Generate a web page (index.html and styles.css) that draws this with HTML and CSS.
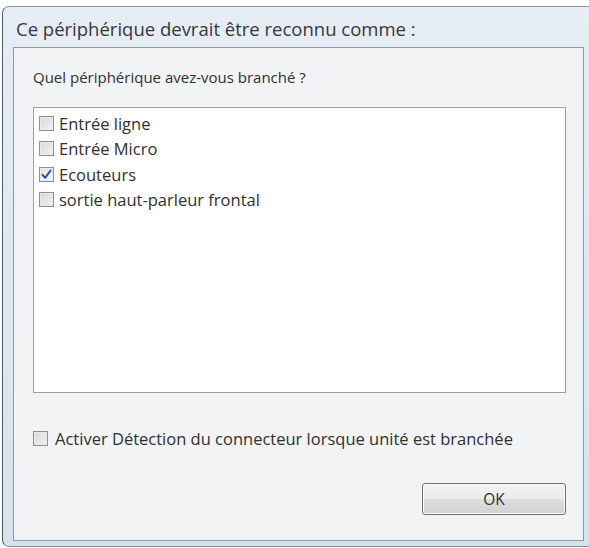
FILE: index.html
```html
<!DOCTYPE html>
<html lang="fr">
<head>
<meta charset="utf-8">
<title>Détection du connecteur</title>
<link rel="stylesheet" href="styles.css">
</head>
<body>
<div class="window">
  <div class="title">Ce périphérique devrait être reconnu comme :</div>
  <div class="panel">
    <div class="question">Quel périphérique avez-vous branché ?</div>
    <div class="listbox">
      <label class="item"><span class="cb"></span>Entrée ligne</label>
      <label class="item"><span class="cb"></span>Entrée Micro</label>
      <label class="item"><span class="cb checked"><svg viewBox="0 0 13 13" width="13" height="13"><path d="M2.5 6.8 L5.2 9.8 L10.5 2.5" fill="none" stroke="#2a4fa0" stroke-width="2" stroke-linecap="round" stroke-linejoin="round"/></svg></span>Ecouteurs</label>
      <label class="item"><span class="cb"></span>sortie haut-parleur frontal</label>
    </div>
    <label class="detect"><span class="cb"></span>Activer Détection du connecteur lorsque unité est branchée</label>
    <div class="actions">
      <button class="btn">OK</button>
    </div>
  </div>
</div>
</body>
</html>
```
FILE: styles.css
```css
html, body {
  margin: 0;
  padding: 0;
  background: #ffffff;
  overflow: hidden;
}
body {
  width: 589px;
  height: 548px;
  font-family: "Open Sans", "Noto Sans", sans-serif;
  color: #303030;
}
.window {
  margin: 6px 0 0 2px;
  width: 600px;
  height: 541px;
  box-sizing: border-box;
  border-left: 1px solid #4e5a66;
  border-top: 1px solid #8a98a6;
  border-bottom: 1px solid #7f8e9c;
  border-radius: 7px 0 0 7px;
  background: linear-gradient(180deg, #e6edf4 0%, #dde7f0 60%, #d6e3ee 100%);
  padding: 0 0 5px 10px;
  display: flex;
  flex-direction: column;
}
.title {
  height: 40px;
  display: flex;
  align-items: center;
  padding-left: 3px;
  padding-top: 2px;
  box-sizing: border-box;
  font-size: 18.5px;
  color: #383838;
}
.panel {
  width: 571px;
  flex: 1;
  box-sizing: border-box;
  border: 1px solid #8b98a5;
  background: #f1f3f5;
  padding: 0 17px 0 19px;
  display: flex;
  flex-direction: column;
}
.question {
  height: 59px;
  display: flex;
  align-items: center;
  font-size: 15px;
  padding-bottom: 2px;
  box-sizing: border-box;
}
.listbox {
  height: 286px;
  box-sizing: border-box;
  border: 1px solid #9aa0a6;
  background: #ffffff;
  padding: 3px 5px;
  display: flex;
  flex-direction: column;
}
.item {
  height: 25.3px;
  display: flex;
  align-items: center;
  gap: 5px;
  font-size: 16.5px;
  color: #303030;
}
.cb {
  width: 13px;
  height: 13px;
  border: 1px solid #8e8f8f;
  background: linear-gradient(135deg, #d8d8d8 0%, #f2f2f2 100%);
  box-shadow: inset 0 0 0 1px #e9e9e9;
  flex: none;
  display: flex;
  align-items: center;
  justify-content: center;
}
.cb.checked {
  background: linear-gradient(135deg, #e2e6ec 0%, #f6f7f9 100%);
}
.cb svg {
  display: block;
}
.detect {
  margin-top: 31px;
  height: 28px;
  display: flex;
  align-items: center;
  gap: 7px;
  font-size: 16.5px;
  color: #303030;
}
.actions {
  margin-top: 31px;
  display: flex;
  justify-content: flex-end;
}
.btn {
  width: 144px;
  height: 32px;
  border: 1px solid #707070;
  border-radius: 3px;
  background: linear-gradient(180deg, #f3f3f3 0%, #ececec 48%, #dedede 52%, #d2d2d2 100%);
  box-shadow: inset 0 0 0 1px #fbfbfb;
  font-family: "Open Sans", "Noto Sans", sans-serif;
  font-size: 15.5px;
  color: #303030;
  padding: 0;
}
```
